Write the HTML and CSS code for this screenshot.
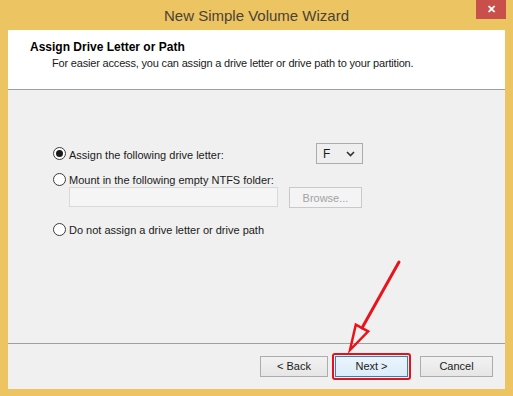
FILE: index.html
```
<!DOCTYPE html>
<html lang="en">
<head>
    <meta charset="UTF-8">
    <title>New Simple Volume Wizard</title>
    <link rel="stylesheet" href="styles.css">
</head>
<body>
<div class="window">
    <div class="titlebar">
        <span class="caption">New Simple Volume Wizard</span>
        <span class="close">&#x2715;</span>
    </div>
    <div class="client">
        <div class="header">
            <div class="head-title">Assign Drive Letter or Path</div>
            <div class="head-sub">For easier access, you can assign a drive letter or drive path to your partition.</div>
        </div>
        <div class="body">
            <div class="options">
                <div class="row row-first">
                    <span class="radio checked"></span>
                    <span class="label">Assign the following drive letter:</span>
                    <span class="combo">F<svg width="9" height="6" viewBox="0 0 9 6"><path d="M1 1l3.5 3.5L8 1" fill="none" stroke="#333" stroke-width="1.6"/></svg></span>
                </div>
                <div class="row row-second">
                    <span class="radio"></span>
                    <span class="label">Mount in the following empty NTFS folder:</span>
                </div>
                <div class="field-row">
                    <span class="textbox"></span>
                    <span class="btn disabled">Browse...</span>
                </div>
                <div class="row row-third">
                    <span class="radio"></span>
                    <span class="label">Do not assign a drive letter or drive path</span>
                </div>
            </div>
        </div>
        <div class="footer">
            <span class="btn back">&lt; Back</span>
            <span class="mark"><span class="btn next">Next &gt;</span></span>
            <span class="btn cancel">Cancel</span>
        </div>
    </div>
    <!-- red annotation arrow -->
    <svg class="arrow" width="513" height="396" viewBox="0 0 513 396">
        <line x1="399" y1="262" x2="362" y2="328" stroke="#e8141c" stroke-width="3" stroke-linecap="round"/>
        <polygon points="350,350 355.8,324.6 368.2,331.4" fill="none" stroke="#e8141c" stroke-width="2.5" stroke-linejoin="miter"/>
    </svg>
</div>
</body>
</html>
```

FILE: styles.css
```
*{margin: 0;padding: 0;box-sizing: border-box;}

body{
    font-family: "Liberation Sans", Arial, sans-serif;
    font-size: 11px;
    color: #1a1a1a;
}
.window{
    position: relative;
    width: 513px;
    height: 396px;
    background: #ecc462;
    display: flex;
    flex-direction: column;
}
.titlebar{
    height: 30px;
    position: relative;
    display: flex;
    justify-content: center;
    align-items: center;
}
.caption{
    font-size: 15px;
    color: #4a4236;
    margin-top: 1px;
}
.close{
    position: absolute;
    top: 0;
    right: 7px;
    width: 30px;
    height: 19px;
    background: #c94f4b;
    color: #fff;
    font-size: 11px;
    font-weight: bold;
    display: flex;
    justify-content: center;
    align-items: center;
}
.client{
    margin: 0 8px 0 8px;
    height: 359px;
    background: #f0f0f0;
    display: flex;
    flex-direction: column;
}
.header{
    height: 60px;
    background: #fff;
    border-bottom: 1px solid #a0a0a0;
    padding: 10px 0 0 22px;
}
.head-title{
    font-weight: bold;
    font-size: 12px;
    color: #000;
}
.head-sub{
    margin: 3px 0 0 22px;
    color: #1a1a1a;
    letter-spacing: -0.18px;
}
.body{
    flex: 1;
    padding: 53px 0 0 45px;
    border-bottom: 1px solid #a0a0a0;
}
.options{
    width: 310px;
}
.row{
    display: flex;
    align-items: center;
}
.row-first{
    height: 21px;
}
.row-second{
    height: 16px;
    margin-top: 7px;
}
.row-third{
    height: 16px;
    margin-top: 13px;
}
.radio{
    width: 13px;
    height: 13px;
    border: 1px solid #3c3c3c;
    border-radius: 50%;
    background: #fff;
    position: relative;
    flex: none;
}
.radio.checked::after{
    content: "";
    position: absolute;
    left: 2px;
    top: 2px;
    width: 7px;
    height: 7px;
    border-radius: 50%;
    background: #1a1a1a;
}
.label{
    margin-left: 3px;
    margin-top: 2px;
}
.combo{
    margin-left: auto;
    width: 47px;
    height: 21px;
    border: 1px solid #acacac;
    background: #efefef;
    display: flex;
    align-items: center;
    justify-content: space-between;
    padding: 0 7px 0 6px;
    font-size: 12px;
}
.field-row{
    display: flex;
    align-items: flex-start;
    padding-left: 16px;
}
.textbox{
    width: 209px;
    height: 20px;
    border: 1px solid #d9d9d9;
    background: #f5f5f5;
}
.btn{
    display: flex;
    justify-content: center;
    align-items: center;
    height: 21px;
    border: 1px solid #acacac;
    background: linear-gradient(#f2f2f2, #e6e6e6);
    color: #1a1a1a;
}
.btn.disabled{
    margin-left: 11px;
    width: 73px;
    color: #a3a3a3;
    border-color: #c9c9c9;
    background: #f4f4f4;
}
.footer{
    flex: none;
    height: 45px;
    display: flex;
    align-items: center;
    justify-content: flex-end;
    padding: 0 12px 1px 0;
}
.back{
    width: 68px;
}
.mark{
    margin-left: 4px;
    padding: 1px;
    border: 2px solid #e0141e;
    border-radius: 3px;
}
.next{
    width: 73px;
    border-color: #3c7fb1;
    background: linear-gradient(#eaf4fc, #dcecf9);
}
.cancel{
    margin-left: 9px;
    width: 73px;
}
.arrow{
    position: absolute;
    left: 0;
    top: 0;
    pointer-events: none;
}
```
